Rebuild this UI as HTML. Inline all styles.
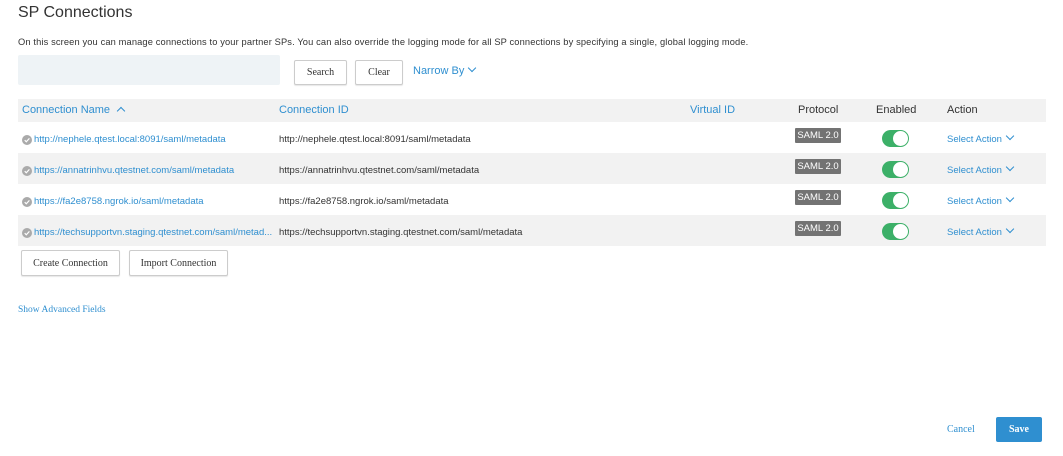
<!DOCTYPE html>
<html><head><style>
body{margin:0;width:1063px;height:456px;background:#fff;font-family:"Liberation Sans",sans-serif;position:relative;overflow:hidden;color:#333}
.a{position:absolute;white-space:nowrap}
.blue{color:#2f8fd0}
.btn{position:absolute;border:1px solid #ccc;border-radius:2px;background:#fff;font-family:"Liberation Serif",serif;font-size:10px;color:#333;text-align:center;box-sizing:border-box;box-shadow:0 1px 1px rgba(0,0,0,.1)}
.row{position:absolute;left:18px;width:1028px;height:31px}
.saml{position:absolute;left:795px;width:46px;height:15px;background:#737373;color:#fff;font-size:9.5px;line-height:16px;text-align:center;border-radius:1px}
.tog{position:absolute;left:882px;width:27px;height:17px;border-radius:9px;background:#3cb068}
.tog:after{content:"";position:absolute;right:1px;top:1px;width:15px;height:15px;border-radius:50%;background:#fff}
.chk{position:absolute;left:22px;width:10px;height:10px}
.t{font-size:9.5px}
.chev{display:inline-block;width:5px;height:5px;border-right:1px solid #2f8fd0;border-bottom:1px solid #2f8fd0;transform:rotate(45deg);margin-left:5px;position:relative;top:-3px}
</style></head><body>
<div class="a" style="left:18px;top:4px;font-size:16px;color:#333">SP Connections</div>
<div class="a" style="left:18px;top:37px;font-size:9.3px;color:#333;letter-spacing:0.13px">On this screen you can manage connections to your partner SPs. You can also override the logging mode for all SP connections by specifying a single, global logging mode.</div>
<div class="a" style="left:18px;top:55px;width:262px;height:30px;background:#eef3f6;border-radius:2px"></div>
<div class="btn" style="left:294px;top:60px;width:53px;height:25px;line-height:24px">Search</div>
<div class="btn" style="left:355px;top:60px;width:48px;height:25px;line-height:24px">Clear</div>
<div class="a blue" style="left:413px;top:65px;font-size:11px">Narrow By<span class="chev"></span></div>
<div class="row" style="top:99px;height:23px;background:#f2f2f2"></div>
<div class="a blue" style="left:22px;top:104px;font-size:11px">Connection Name<span class="chev" style="transform:rotate(225deg);top:1px;margin-left:8px"></span></div>
<div class="a blue" style="left:279px;top:104px;font-size:11px">Connection ID</div>
<div class="a blue" style="left:690px;top:104px;font-size:11px">Virtual ID</div>
<div class="a" style="left:798px;top:104px;font-size:11px">Protocol</div>
<div class="a" style="left:876px;top:104px;font-size:11px">Enabled</div>
<div class="a" style="left:947px;top:104px;font-size:11px">Action</div>

<div class="row" style="top:153px;background:#f2f2f2"></div>
<div class="row" style="top:215px;background:#f2f2f2"></div>

<svg class="chk" style="top:135px" viewBox="0 0 10 10"><circle cx="5" cy="5" r="5" fill="#aaa"/><path d="M2.7 5.2 L4.3 6.8 L7.4 3.4" stroke="#fff" stroke-width="1.2" fill="none"/></svg>
<div class="a blue t" style="left:34px;top:134px">http://nephele.qtest.local:8091/saml/metadata</div><div class="a t" style="left:279px;top:134px">http://nephele.qtest.local:8091/saml/metadata</div><div class="saml" style="top:128px">SAML 2.0</div><div class="tog" style="top:130px"></div><div class="a blue t" style="left:947px;top:134px">Select Action<span class="chev"></span></div>
<svg class="chk" style="top:166px" viewBox="0 0 10 10"><circle cx="5" cy="5" r="5" fill="#aaa"/><path d="M2.7 5.2 L4.3 6.8 L7.4 3.4" stroke="#fff" stroke-width="1.2" fill="none"/></svg>
<div class="a blue t" style="left:34px;top:165px">https://annatrinhvu.qtestnet.com/saml/metadata</div><div class="a t" style="left:279px;top:165px">https://annatrinhvu.qtestnet.com/saml/metadata</div><div class="saml" style="top:159px">SAML 2.0</div><div class="tog" style="top:161px"></div><div class="a blue t" style="left:947px;top:165px">Select Action<span class="chev"></span></div>
<svg class="chk" style="top:197px" viewBox="0 0 10 10"><circle cx="5" cy="5" r="5" fill="#aaa"/><path d="M2.7 5.2 L4.3 6.8 L7.4 3.4" stroke="#fff" stroke-width="1.2" fill="none"/></svg>
<div class="a blue t" style="left:34px;top:196px">https://fa2e8758.ngrok.io/saml/metadata</div><div class="a t" style="left:279px;top:196px">https://fa2e8758.ngrok.io/saml/metadata</div><div class="saml" style="top:190px">SAML 2.0</div><div class="tog" style="top:192px"></div><div class="a blue t" style="left:947px;top:196px">Select Action<span class="chev"></span></div>
<svg class="chk" style="top:228px" viewBox="0 0 10 10"><circle cx="5" cy="5" r="5" fill="#aaa"/><path d="M2.7 5.2 L4.3 6.8 L7.4 3.4" stroke="#fff" stroke-width="1.2" fill="none"/></svg>
<div class="a blue t" style="left:34px;top:227px">https://techsupportvn.staging.qtestnet.com/saml/metad...</div><div class="a t" style="left:279px;top:227px">https://techsupportvn.staging.qtestnet.com/saml/metadata</div><div class="saml" style="top:221px">SAML 2.0</div><div class="tog" style="top:223px"></div><div class="a blue t" style="left:947px;top:227px">Select Action<span class="chev"></span></div>

<div class="btn" style="left:21px;top:250px;width:99px;height:26px;line-height:26px">Create Connection</div>
<div class="btn" style="left:129px;top:250px;width:99px;height:26px;line-height:26px">Import Connection</div>
<div class="a blue" style="left:18px;top:305px;font-size:9.5px;font-family:'Liberation Serif',serif">Show Advanced Fields</div>
<div class="a blue" style="left:947px;top:424px;font-size:10px;font-family:'Liberation Serif',serif">Cancel</div>
<div class="a" style="left:996px;top:417px;width:46px;height:25px;background:#2f8fd0;color:#fff;font-size:10px;font-weight:bold;font-family:'Liberation Serif',serif;text-align:center;line-height:25px;border-radius:2px">Save</div>
</body></html>
